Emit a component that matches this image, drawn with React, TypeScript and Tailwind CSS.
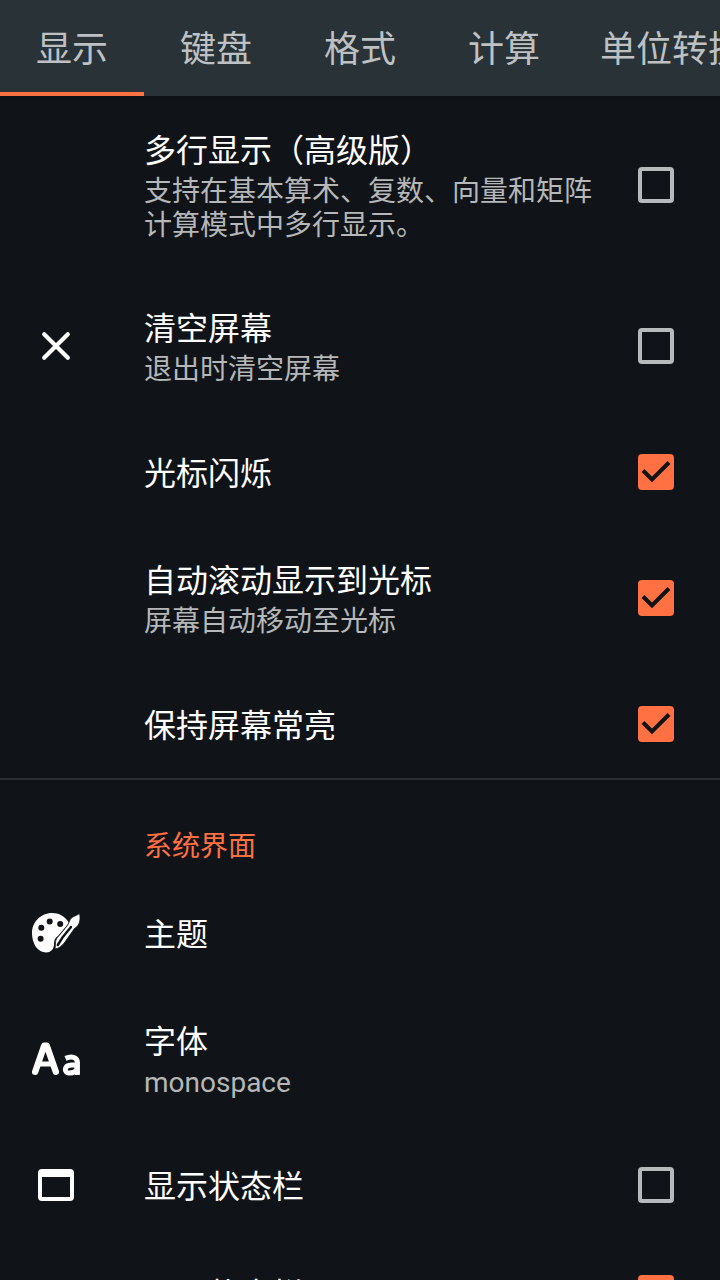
import { useState } from 'react';

interface Setting {
  id: string;
  title: string;
  summary?: string;
  icon?: React.ReactNode;
  checked?: boolean;
}

const TABS = ['显示', '键盘', '格式', '计算', '单位转换'];

const CloseIcon = () => (
  <svg className="w-12 h-12" viewBox="0 0 24 24" fill="none" stroke="white" strokeWidth="2.1" strokeLinecap="round">
    <path d="M6.1 6.1 17.9 17.9M17.9 6.1 6.1 17.9" />
  </svg>
);

const PaletteIcon = () => (
  <svg className="w-12 h-12" viewBox="0 0 48 48">
    <path
      fill="white"
      d="M20 4C9 4 0 13 0 24C0 35 6 43.5 14 43.5C20 43.5 22 39 22 35C22 31 23 29 26 27L37 14C33 7 27 4 20 4Z"
    />
    <circle cx="17.7" cy="12.6" r="3" fill="#101418" />
    <circle cx="28.2" cy="15" r="3" fill="#101418" />
    <circle cx="9.3" cy="18.8" r="3" fill="#101418" />
    <circle cx="8.6" cy="29.7" r="3" fill="#101418" />
    <path
      fill="white"
      stroke="#101418"
      strokeWidth="0.8"
      d="M47.5 4.5C43.5 7.5 38.5 7.5 37.5 12.5L35 17L25.5 28.5C22.5 32 24 35 23 40C29 39 32 34.5 35 30L42.5 19.5C47.5 17 49 10.5 47.5 4.5Z"
    />
    <path d="M39 18 30.5 28.5 25.8 36" stroke="#101418" strokeWidth="2.4" strokeLinecap="round" fill="none" />
  </svg>
);

const FontIcon = () => (
  <svg className="w-12 h-12" viewBox="0 0 48 48" fill="none" stroke="white" strokeLinejoin="round">
    <path d="M3.2 36.8 12.2 10.8H14.8L23.8 36.8" strokeWidth="6.4" strokeLinecap="round" />
    <path d="M7 29H20" strokeWidth="5" />
    <path d="M33.5 23.4C39 21 45.4 21.5 45.4 27.5V40M45 30H39.5C31.8 30 31.8 38 37 38C42 38 45 36 45 32.5" strokeWidth="5" />
  </svg>
);

const WindowIcon = () => (
  <svg className="w-12 h-12" viewBox="0 0 24 24" fill="white">
    <path d="M19 4H5a2 2 0 0 0-2 2v12a2 2 0 0 0 2 2h14a2 2 0 0 0 2-2V6a2 2 0 0 0-2-2zm0 14H5V8h14v10z" />
  </svg>
);

const SCREEN_SETTINGS: Setting[] = [
  { id: 'multiline', title: '多行显示（高级版）', summary: '支持在基本算术、复数、向量和矩阵计算模式中多行显示。', checked: false },
  { id: 'clear', title: '清空屏幕', summary: '退出时清空屏幕', icon: <CloseIcon />, checked: false },
  { id: 'blink', title: '光标闪烁', checked: true },
  { id: 'autoscroll', title: '自动滚动显示到光标', summary: '屏幕自动移动至光标', checked: true },
  { id: 'keepon', title: '保持屏幕常亮', checked: true },
];

const SYSTEM_SETTINGS: Setting[] = [
  { id: 'theme', title: '主题', icon: <PaletteIcon /> },
  { id: 'font', title: '字体', summary: 'monospace', icon: <FontIcon /> },
  { id: 'statusbar', title: '显示状态栏', icon: <WindowIcon />, checked: false },
  { id: 'appstatusbar', title: '显示状态栏', checked: true },
];

function SettingRow({ setting }: { setting: Setting }) {
  const [checked, setChecked] = useState(!!setting.checked);
  const { id, title, summary, icon } = setting;
  const hasCheckbox = setting.checked !== undefined;

  const content = (
    <>
      <span className="w-28 shrink-0">{icon}</span>
      <span className={`flex-1 min-w-0 ${summary ? 'pt-[33px] pb-[31px]' : 'pt-[34px] pb-[30px]'}`}>
        <span className="block text-[32px] leading-[44px] text-white">{title}</span>
        {summary && <span className="block pt-0.5 text-[28px] leading-[34px] text-[#b5b7b8]">{summary}</span>}
      </span>
    </>
  );

  if (!hasCheckbox) {
    return <button type="button" className="flex w-full items-center px-8 text-left">{content}</button>;
  }

  return (
    <label htmlFor={id} className="flex items-center pl-8 pr-[46px]">
      {content}
      <span className="relative ml-10 h-9 w-9 shrink-0">
        <input
          id={id}
          type="checkbox"
          checked={checked}
          onChange={e => setChecked(e.target.checked)}
          className="block h-9 w-9 appearance-none rounded border-4 border-[#b7b9ba] checked:border-[#ff7043] checked:bg-[#ff7043]"
        />
        {checked && (
          <svg className="pointer-events-none absolute inset-0" viewBox="0 0 36 36" fill="none" stroke="#101418" strokeWidth="4">
            <path d="M5 16.5 14 25.5 31 8.5" />
          </svg>
        )}
      </span>
    </label>
  );
}

export default function App() {
  const [activeTab, setActiveTab] = useState(TABS[0]);

  return (
    <div className="h-screen overflow-hidden bg-[#101418] font-[Roboto,'Noto_Sans_CJK_SC',sans-serif]">
      <nav className="relative flex h-24 overflow-hidden bg-[#283237] shadow-md">
        {TABS.map(tab => (
          <button
            key={tab}
            type="button"
            onClick={() => setActiveTab(tab)}
            className={`min-w-36 shrink-0 border-b-4 px-6 pt-2 text-4xl text-[#bec1c3] ${activeTab === tab ? 'border-[#ff7043]' : 'border-transparent'}`}
          >
            {tab}
          </button>
        ))}
      </nav>

      <main>
        <section>
          {SCREEN_SETTINGS.map(s => <SettingRow key={s.id} setting={s} />)}
        </section>
        <section className="border-t-2 border-[#2b2f33]">
          <h2 className="pl-36 pt-[49px] pb-[14px] text-[28px] leading-[36px] text-[#ff7043]">系统界面</h2>
          {SYSTEM_SETTINGS.map(s => <SettingRow key={s.id} setting={s} />)}
        </section>
      </main>
    </div>
  );
}
